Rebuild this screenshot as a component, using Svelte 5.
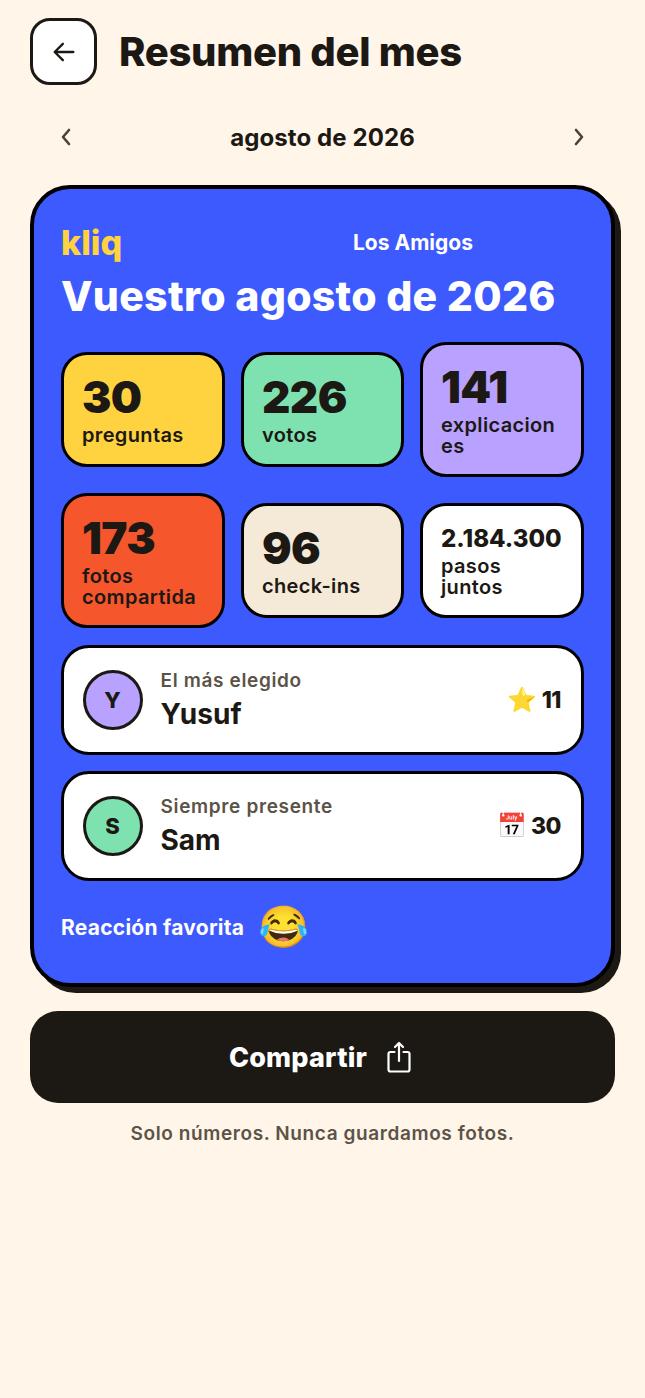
<script>
  const stats = [
    { value: "30", label: "preguntas", color: "#ffd23f" },
    { value: "226", label: "votos", color: "#7de2b0" },
    { value: "141", label: "explicaciones", color: "#b8a1ff" },
    { value: "173", label: "fotos compartida", color: "#f5562c" },
    { value: "96", label: "check-ins", color: "#f5e9d8" },
    { value: "2.184.300", label: "pasos juntos", color: "#ffffff", small: true },
  ];

  const people = [
    { initial: "Y", title: "El más elegido", name: "Yusuf", icon: "⭐", count: 11, color: "#b8a1ff" },
    { initial: "S", title: "Siempre presente", name: "Sam", icon: "📅", count: 30, color: "#7de2b0" },
  ];
</script>

<main class="page">
  <header class="top">
    <button class="back" aria-label="Volver">
      <svg width="28" height="28" viewBox="0 0 24 24" fill="none" stroke="currentColor" stroke-width="2" stroke-linecap="round" stroke-linejoin="round">
        <path d="M20 12H4.500M11 5l-7 7 7 7" />
      </svg>
    </button>
    <h1>Resumen del mes</h1>
  </header>

  <div class="month">
    <svg width="24" height="24" viewBox="0 0 24 24" fill="none" stroke="currentColor" stroke-width="2.600" stroke-linecap="round" stroke-linejoin="round">
      <path d="M15 5l-6 7 6 7" />
    </svg>
    <span>agosto de 2026</span>
    <svg width="24" height="24" viewBox="0 0 24 24" fill="none" stroke="currentColor" stroke-width="2.600" stroke-linecap="round" stroke-linejoin="round">
      <path d="M9 5l6 7-6 7" />
    </svg>
  </div>

  <section class="card">
    <div class="brand">
      <span class="logo">kliq</span>
      <span class="group">Los Amigos</span>
    </div>
    <h2>Vuestro agosto de 2026</h2>

    <div class="stats">
      {#each stats as stat}
        <div class="stat" style="background: {stat.color}">
          <div class="value" class:small={stat.small}>{stat.value}</div>
          <div class="label">{stat.label}</div>
        </div>
      {/each}
    </div>

    {#each people as person}
      <div class="person">
        <div class="avatar" style="background: {person.color}">{person.initial}</div>
        <div class="who">
          <div class="role">{person.title}</div>
          <div class="name">{person.name}</div>
        </div>
        <div class="count">
          <span class="emoji">{person.icon}</span>
          <span>{person.count}</span>
        </div>
      </div>
    {/each}

    <div class="reaction">
      <span>Reacción favorita</span>
      <span class="emoji big">😂</span>
    </div>
  </section>

  <button class="share">
    <span>Compartir</span>
    <svg width="24" height="32" viewBox="0 0 24 32" fill="none" stroke="currentColor" stroke-width="2.200" stroke-linecap="round" stroke-linejoin="round">
      <path d="M7.500 11H3.500a2 2 0 0 0-2 2v15.500a2 2 0 0 0 2 2h17a2 2 0 0 0 2-2V13a2 2 0 0 0-2-2h-4" />
      <path d="M12 20V2M8 6l4-4 4 4" />
    </svg>
  </button>
  <p class="note">Solo números. Nunca guardamos fotos.</p>
</main>

<style>
  :global(body) {
    margin: 0;
    background: #fff5e9;
  }
  .page {
    min-height: 1398px;
    box-sizing: border-box;
    padding: 18px 30px 0;
    font-family: Inter, "Noto Sans", sans-serif;
    color: #1c1814;
  }
  button {
    font-family: inherit;
    cursor: pointer;
  }
  .top {
    display: flex;
    align-items: center;
    gap: 22px;
  }
  .back {
    width: 67px;
    height: 67px;
    padding: 0;
    display: grid;
    place-items: center;
    background: #fff;
    border: 3.5px solid #1c1814;
    border-radius: 20px;
    color: #1c1814;
  }
  h1 {
    margin: 0;
    font-size: 40px;
    font-weight: 800;
    letter-spacing: -0.3px;
  }
  .month {
    display: flex;
    align-items: center;
    justify-content: space-between;
    margin-top: 33px;
    padding: 0 24px;
    height: 38px;
    font-size: 24px;
    font-weight: 700;
    letter-spacing: 0.1px;
  }
  .month svg {
    color: #4a4239;
  }
  .card {
    margin-top: 29px;
    box-sizing: border-box;
    padding: 27px 27px 28px;
    background: #3d5afe;
    border: 4px solid #000;
    border-radius: 40px;
    box-shadow: 6px 6px 0 #1c1814;
  }
  .brand {
    display: flex;
    align-items: center;
    height: 52px;
  }
  .logo {
    width: 292px;
    font-size: 34px;
    font-weight: 800;
    color: #ffd23f;
  }
  .group {
    font-size: 21px;
    font-weight: 700;
    color: #fff;
  }
  h2 {
    margin: 3px 0 0;
    font-size: 41px;
    font-weight: 800;
    letter-spacing: 0.3px;
    color: #fff;
  }
  .stats {
    display: grid;
    grid-template-columns: 164px 163px 164px;
    gap: 15.5px 16px;
    align-items: center;
    margin: 20.5px 0 17px;
  }
  .stat {
    box-sizing: border-box;
    min-height: 115px;
    padding: 19px 20px 17.5px 18px;
    border: 3.5px solid #000;
    border-radius: 26px;
    overflow-wrap: anywhere;
  }
  .value {
    font-size: 44px;
    line-height: 46px;
    font-weight: 900;
    letter-spacing: -0.6px;
    white-space: nowrap;
  }
  .value.small {
    margin-bottom: -2px;
    font-size: 24px;
    line-height: 28px;
    font-weight: 800;
    letter-spacing: 0;
  }
  .label {
    margin-top: 5px;
    font-size: 20px;
    line-height: 21px;
    font-weight: 600;
    letter-spacing: 0.35px;
  }
  .person {
    display: flex;
    align-items: center;
    height: 110px;
    box-sizing: border-box;
    margin-top: 16px;
    padding: 0 20px 0 18.5px;
    background: #fff;
    border: 3.5px solid #000;
    border-radius: 28px;
  }
  .avatar {
    width: 60px;
    height: 60px;
    box-sizing: border-box;
    display: grid;
    place-items: center;
    border: 3.5px solid #1c1814;
    border-radius: 50%;
    font-size: 22px;
    font-weight: 800;
  }
  .who {
    flex: 1;
    margin-left: 18px;
  }
  .role {
    font-size: 19px;
    line-height: 24px;
    font-weight: 600;
    letter-spacing: 0.65px;
    color: #5c5348;
  }
  .name {
    margin-top: 4px;
    font-size: 28px;
    line-height: 34px;
    font-weight: 700;
  }
  .count {
    display: flex;
    align-items: center;
    gap: 4px;
    font-size: 23px;
    font-weight: 800;
    letter-spacing: -0.5px;
  }
  .emoji {
    font-family: "Noto Color Emoji", sans-serif;
    font-size: 24px;
    letter-spacing: 0;
  }
  .reaction {
    display: flex;
    align-items: center;
    gap: 14px;
    margin-top: 18px;
    font-size: 21px;
    font-weight: 700;
    letter-spacing: 0.25px;
    color: #fff;
  }
  .emoji.big {
    font-size: 41px;
    line-height: 56px;
  }
  .share {
    width: 100%;
    height: 92px;
    margin-top: 24px;
    display: flex;
    align-items: center;
    justify-content: center;
    gap: 20px;
    background: #1c1814;
    border: 0;
    border-radius: 28px;
    color: #fff;
    font-size: 27px;
    font-weight: 800;
    letter-spacing: 0.2px;
  }
  .share svg {
    margin-right: 5px;
  }
  .note {
    margin: 19px 0 0;
    text-align: center;
    font-size: 19px;
    font-weight: 600;
    letter-spacing: 0.6px;
    color: #5c5348;
  }
</style>
